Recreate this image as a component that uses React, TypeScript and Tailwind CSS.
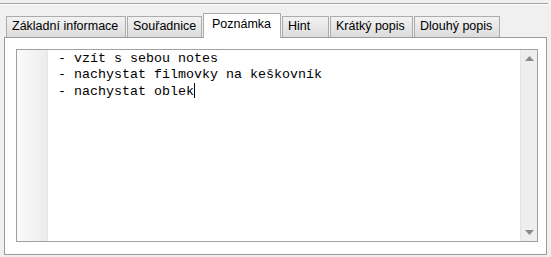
export default function App() {
  const tabs = [
    { label: "Základní informace", w: "w-[120px]" },
    { label: "Souřadnice", w: "w-[75px]" },
  ];
  const tabsRight = [
    { label: "Hint", w: "w-[47px]" },
    { label: "Krátký popis", w: "w-[83px]" },
    { label: "Dlouhý popis", w: "w-[86px]" },
  ];

  return (
    <div className="w-[551px] h-[257px] bg-[#f0f0f0] overflow-hidden font-['Liberation_Sans',Arial,sans-serif] text-[12.5px] text-black">
      {/* top separator */}
      <div className="pt-[3px]">
        <div className="w-[548px] h-px bg-[#a0a0a0]" />
        <div className="w-[548px] h-px bg-white" />
      </div>

      {/* Tabs */}
      <div className="flex items-end gap-px pl-[6px] h-[25px] mt-[7px] relative z-10">
        {tabs.map((t) => (
          <div
            key={t.label}
            className={`${t.w} h-[21px] border border-b-0 border-[#acacac] bg-gradient-to-b from-[#f2f2f2] to-[#dcdcdc] px-[5px] leading-[19px] whitespace-nowrap`}
          >
            {t.label}
          </div>
        ))}
        <div className="w-[78px] h-[25px] -mb-px border border-b-0 border-[#acacac] bg-white pl-[8px] leading-[20px] whitespace-nowrap">
          Poznámka
        </div>
        {tabsRight.map((t) => (
          <div
            key={t.label}
            className={`${t.w} h-[21px] border border-b-0 border-[#acacac] bg-gradient-to-b from-[#f2f2f2] to-[#dcdcdc] px-[5px] leading-[19px] whitespace-nowrap`}
          >
            {t.label}
          </div>
        ))}
      </div>

      {/* Panel */}
      <div className="ml-[4px] w-[543px] h-[218px] border border-[#9a9a9a] bg-white pt-[11px] pl-[11px]">
        <div className="w-[522px] h-[193px] border border-[#a0a0a0] flex">
          {/* gutter */}
          <div className="w-[30px] h-full bg-gradient-to-r from-[#fbfbfb] to-[#ececec]" />
          <div className="w-px h-full bg-[#e6e6e6]" />
          {/* text */}
          <div className="flex-1 pl-[10px] pt-[1px] font-['Liberation_Mono','Courier_New',monospace] text-[13.33px] leading-[16px] whitespace-pre">
            <div>- vzít s sebou notes</div>
            <div>- nachystat filmovky na keškovník</div>
            <div>
              - nachystat oblek
              <span className="inline-block w-px h-[15px] bg-black align-[-3px]" />
            </div>
          </div>
          {/* scrollbar */}
          <div className="w-[17px] h-full bg-[#eeeeee] border-l border-[#e4e4e4] flex flex-col items-center justify-between py-[6px]">
            <svg width="9" height="5" viewBox="0 0 9 5">
              <path d="M4.5 0 L9 5 L0 5 Z" fill="#8a8a8a" />
            </svg>
            <svg width="9" height="5" viewBox="0 0 9 5">
              <path d="M0 0 L9 0 L4.5 5 Z" fill="#8a8a8a" />
            </svg>
          </div>
        </div>
      </div>
    </div>
  );
}
